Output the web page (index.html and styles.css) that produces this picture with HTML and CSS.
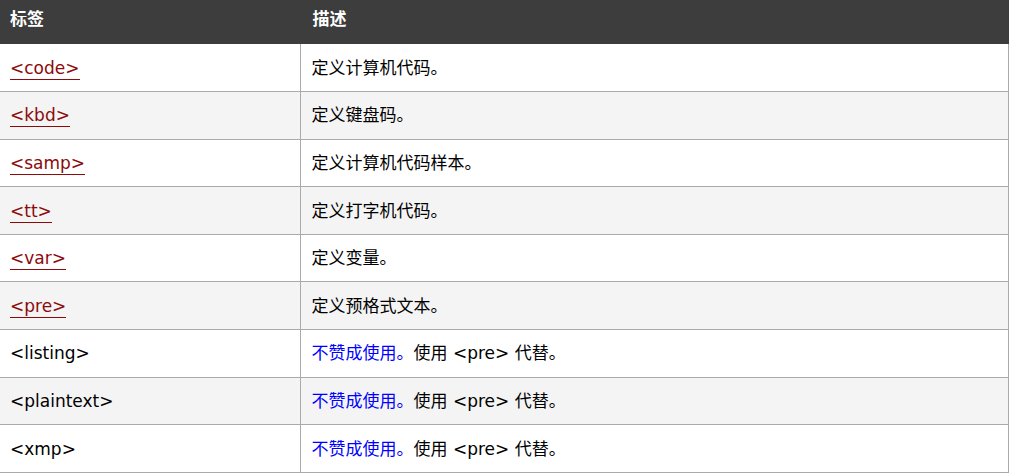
FILE: index.html
```html
<!DOCTYPE html>
<html lang="zh">
<head>
<meta charset="utf-8">
<title>标签</title>
<link rel="stylesheet" href="styles.css">
</head>
<body>
<table class="ref">
  <thead>
    <tr><th class="c1">标签</th><th class="c2">描述</th></tr>
  </thead>
  <tbody>
    <tr><td class="c1"><a class="tag" href="#">&lt;code&gt;</a></td><td class="c2">定义计算机代码。</td></tr>
    <tr class="alt"><td class="c1"><a class="tag" href="#">&lt;kbd&gt;</a></td><td class="c2">定义键盘码。</td></tr>
    <tr><td class="c1"><a class="tag" href="#">&lt;samp&gt;</a></td><td class="c2">定义计算机代码样本。</td></tr>
    <tr class="alt"><td class="c1"><a class="tag" href="#">&lt;tt&gt;</a></td><td class="c2">定义打字机代码。</td></tr>
    <tr><td class="c1"><a class="tag" href="#">&lt;var&gt;</a></td><td class="c2">定义变量。</td></tr>
    <tr class="alt"><td class="c1"><a class="tag" href="#">&lt;pre&gt;</a></td><td class="c2">定义预格式文本。</td></tr>
    <tr><td class="c1">&lt;listing&gt;</td><td class="c2"><span class="dep">不赞成使用。</span>使用 &lt;pre&gt; 代替。</td></tr>
    <tr class="alt"><td class="c1">&lt;plaintext&gt;</td><td class="c2"><span class="dep">不赞成使用。</span>使用 &lt;pre&gt; 代替。</td></tr>
    <tr><td class="c1">&lt;xmp&gt;</td><td class="c2"><span class="dep">不赞成使用。</span>使用 &lt;pre&gt; 代替。</td></tr>
  </tbody>
</table>
</body>
</html>
```

FILE: styles.css
```css
html, body {
  margin: 0;
  padding: 0;
  background: #fff;
}
body {
  font-family: "DejaVu Sans", "Noto Sans CJK SC", sans-serif;
  font-size: 17px;
  color: #000;
}
.ref {
  border-collapse: collapse;
  width: 1009px;
  table-layout: fixed;
}
.ref th {
  background: #3d3d3d;
  color: #fff;
  font-weight: bold;
  text-align: left;
  line-height: 24px;
  height: 44px;
  box-sizing: border-box;
  padding: 0 10px 13px;
  vertical-align: bottom;
  border-right: 1px solid #3d3d3d;
}
.ref th.c1 { width: 300px; }
.ref th.c2 { padding-left: 12px; }
.ref td {
  height: 47.6px;
  box-sizing: border-box;
  padding: 0 10px;
  line-height: 24px;
  vertical-align: middle;
  border-bottom: 1px solid #aaa;
}
.ref td.c1 {
  padding-left: 10px;
}
.ref td.c2 {
  border-left: 1px solid #aaa;
  border-right: 1px solid #aaa;
  padding-left: 11px;
}
.ref tr.alt td {
  background: #f4f4f4;
}
.tag {
  color: #8b0a0a;
  text-decoration: none;
  border-bottom: 1px solid #8b0a0a;
  padding-bottom: 1px;
}
.dep {
  color: #0000ff;
}
```
